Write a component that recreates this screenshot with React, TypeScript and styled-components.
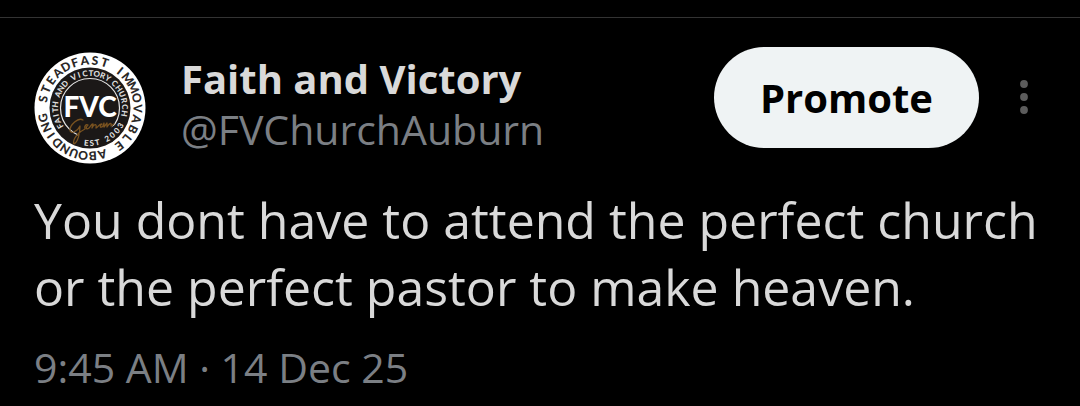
import React from "react";
import styled, { createGlobalStyle } from "styled-components";

const GlobalStyle = createGlobalStyle`
  * { box-sizing: border-box; }
  html { background: #000; }
  body {
    margin: 0;
    background: #000;
    color: #d9d9d9;
    font-family: "Open Sans", "Noto Sans", sans-serif;
  }
`;

const Post = styled.article`
  margin-top: 17px;
  border-top: 1px solid #333;
  padding: 29px 12px 12px 34px;
`;

const Header = styled.header`
  display: flex;
  align-items: flex-start;
`;

const AvatarLink = styled.a`
  flex: none;
  width: 112px;
  height: 112px;
  margin-top: 5px;
  border-radius: 50%;

  svg { display: block; }
`;

const Author = styled.div`
  display: flex;
  flex-direction: column;
  flex: 1;
  min-width: 0;
  margin: 7px 0 0 35px;
`;

const AuthorLink = styled.a<{ $muted?: boolean }>`
  color: ${(p) => (p.$muted ? "#7b7f84" : "#d9d9d9")};
  font-size: ${(p) => (p.$muted ? 41 : 40)}px;
  font-weight: ${(p) => (p.$muted ? 400 : 700)};
  line-height: 50px;
  text-decoration: none;
  white-space: nowrap;
`;

const PromoteButton = styled.button`
  flex: none;
  height: 101px;
  padding: 0 46px;
  border: 0;
  border-radius: 51px;
  background: #eff3f4;
  color: #000;
  font-family: inherit;
  font-size: 40px;
  font-weight: 700;
  line-height: 50px;
`;

const MenuButton = styled.button`
  flex: none;
  display: flex;
  align-items: center;
  justify-content: center;
  width: 89px;
  height: 100px;
  padding: 0;
  border: 0;
  background: transparent;
  color: #5c5c5c;
`;

const Message = styled.p`
  margin: 23px 0 21px;
  font-size: 50px;
  line-height: 67px;
`;

const Timestamp = styled.time`
  display: block;
  color: #7b7f84;
  font-size: 41px;
  line-height: 50px;
`;

type RingProps = {
  text: string;
  from: number;
  to: number;
  radius: number;
  size: number;
  color: string;
  inward?: boolean;
};

// Sets letters round a circle, from one clock angle to another.
function RingText({ text, from, to, radius, size, color, inward }: RingProps) {
  const step = (to - from) / (text.length - 1);
  return (
    <g fill={color} fontSize={size} fontWeight={900} textAnchor="middle">
      {text.split("").map((letter, i) => {
        const angle = from + step * i;
        return (
          <text
            key={i}
            y={inward ? radius : -radius}
            transform={`rotate(${inward ? angle - 180 : angle})`}
          >
            {letter}
          </text>
        );
      })}
    </g>
  );
}

function Logo() {
  return (
    <svg
      width="112"
      height="112"
      viewBox="-56 -56 112 112"
      role="img"
      aria-label="Faith and Victory Church"
      fontFamily="Lato, sans-serif"
    >
      <circle r="55.5" fill="#fff" />
      <circle r="40.5" fill="#1b1817" />
      <circle r="29.5" fill="none" stroke="#e4e4e4" strokeWidth="1.2" />
      <RingText text="STEADFAST" from={-79} to={18} radius={43.5} size={12} color="#2a2726" />
      <RingText text="IMMOVABLE" from={39} to={142} radius={43.5} size={12} color="#2a2726" />
      <RingText text="ABOUNDING" from={165} to={258} radius={43.5} size={12} color="#2a2726" />
      <RingText text="FAITH" from={-121} to={-84} radius={32} size={8} color="#ddd" />
      <RingText text="AND" from={-67} to={-46} radius={32} size={8} color="#ddd" />
      <RingText text="VICTORY" from={-28} to={31} radius={32} size={8} color="#ddd" />
      <RingText text="CHURCH" from={45} to={99} radius={32} size={8} color="#ddd" />
      <path d="M-12 26H10L30 14L34 20L22 34L-10 38Z" fill="#1b1817" />
      <RingText text="EST" from={186} to={168} radius={38} size={8} color="#ddd" inward />
      <RingText text="2003" from={151} to={120} radius={38} size={8} color="#ddd" inward />
      <text y="9" textAnchor="middle" fill="#fff" fontWeight={900} fontSize={28}>
        FVC
      </text>
      <path
        d="M-7 12C-12 9-20 17-20 22C-20 27-12 23-10 18C-10 25-12 34-16 36C-18 32-12 24-5 21C-6 18-4 16-2 17C-5 20-4 22-1 20C1 18 1 16 3 16L2 20C4 16 7 15 6 20C8 20 9 15 12 16C9 18 10 21 13 18L14 15L14 19L17 15L17 19C20 14 22 15 21 18L24 16"
        fill="none"
        stroke="#7a5320"
        strokeWidth="1.3"
        strokeLinecap="round"
        strokeLinejoin="round"
      />
    </svg>
  );
}

export default function App() {
  return (
    <>
      <GlobalStyle />
      <Post>
        <Header>
          <AvatarLink href="#profile">
            <Logo />
          </AvatarLink>
          <Author>
            <AuthorLink href="#profile">Faith and Victory</AuthorLink>
            <AuthorLink href="#profile" $muted>@FVChurchAuburn</AuthorLink>
          </Author>
          <PromoteButton type="button">Promote</PromoteButton>
          <MenuButton type="button" aria-label="More options">
            <svg width="8" height="34" viewBox="0 0 8 34" fill="currentColor" aria-hidden="true">
              <circle cx="4" cy="4" r="3.9" />
              <circle cx="4" cy="17" r="3.9" />
              <circle cx="4" cy="30" r="3.9" />
            </svg>
          </MenuButton>
        </Header>
        <Message>You dont have to attend the perfect church or the perfect pastor to make heaven.</Message>
        <Timestamp dateTime="2025-12-14T09:45">9:45 AM · 14 Dec 25</Timestamp>
      </Post>
    </>
  );
}
